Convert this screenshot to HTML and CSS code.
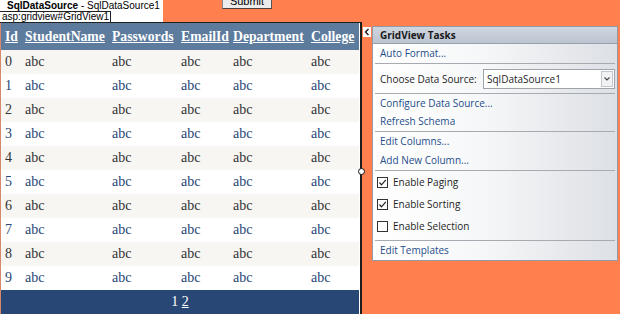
FILE: index.html
```html
<!DOCTYPE html>
<html>
<head>
<meta charset="utf-8">
<link rel="stylesheet" href="styles.css">
</head>
<body>
<div class="top">
  <div class="dslabel">
    <span class="dsline"><b>SqlDataSource</b> - SqlDataSource1</span>
    <div class="tip">asp:gridview#GridView1</div>
  </div>
  <div class="submit">Submit</div>
</div>
<div class="main">
  <div class="frame">
    <table class="grid">
      <colgroup>
        <col class="c1"><col class="c2"><col class="c3"><col class="c4"><col class="c5"><col class="c6">
      </colgroup>
      <thead>
        <tr><th><a>Id</a></th><th><a>StudentName</a></th><th><a>Passwords</a></th><th><a>EmailId</a></th><th><a>Department</a></th><th><a>College</a></th></tr>
      </thead>
      <tbody>
        <tr class="r"><td>0</td><td>abc</td><td>abc</td><td>abc</td><td>abc</td><td>abc</td></tr>
        <tr class="alt"><td>1</td><td>abc</td><td>abc</td><td>abc</td><td>abc</td><td>abc</td></tr>
        <tr class="r"><td>2</td><td>abc</td><td>abc</td><td>abc</td><td>abc</td><td>abc</td></tr>
        <tr class="alt"><td>3</td><td>abc</td><td>abc</td><td>abc</td><td>abc</td><td>abc</td></tr>
        <tr class="r"><td>4</td><td>abc</td><td>abc</td><td>abc</td><td>abc</td><td>abc</td></tr>
        <tr class="alt"><td>5</td><td>abc</td><td>abc</td><td>abc</td><td>abc</td><td>abc</td></tr>
        <tr class="r"><td>6</td><td>abc</td><td>abc</td><td>abc</td><td>abc</td><td>abc</td></tr>
        <tr class="alt"><td>7</td><td>abc</td><td>abc</td><td>abc</td><td>abc</td><td>abc</td></tr>
        <tr class="r"><td>8</td><td>abc</td><td>abc</td><td>abc</td><td>abc</td><td>abc</td></tr>
        <tr class="alt"><td>9</td><td>abc</td><td>abc</td><td>abc</td><td>abc</td><td>abc</td></tr>
        <tr class="pager"><td colspan="6">1 <a>2</a></td></tr>
      </tbody>
    </table>
    <span class="handle"></span>
  </div>
  <div class="smarttag"><svg width="8" height="10" viewBox="0 0 8 10"><polyline points="5.5,2 2.5,5 5.5,8" fill="none" stroke="#1a1a1a" stroke-width="1.4"/></svg></div>
  <div class="tasks">
    <div class="tasks-h">GridView Tasks</div>
    <div class="sec s1"><div class="item link">Auto Format...</div></div>
    <div class="sec s2">
      <span class="lbl">Choose Data Source:</span>
      <div class="dd"><span class="ddtext">SqlDataSource1</span><span class="ddbtn"><svg width="8" height="6" viewBox="0 0 8 6"><polyline points="1.5,1.5 4,4 6.5,1.5" fill="none" stroke="#444" stroke-width="1.1"/></svg></span></div>
    </div>
    <div class="sec s3">
      <div class="item link">Configure Data Source...</div>
      <div class="item link">Refresh Schema</div>
    </div>
    <div class="sec s4">
      <div class="item link">Edit Columns...</div>
      <div class="item link">Add New Column...</div>
    </div>
    <div class="sec s5">
      <div class="chk"><span class="box"><svg width="9" height="9" viewBox="0 0 9 9"><polyline points="1.5,4.5 3.5,6.8 7.8,1.8" fill="none" stroke="#222" stroke-width="1.2"/></svg></span><span>Enable Paging</span></div>
      <div class="chk"><span class="box"><svg width="9" height="9" viewBox="0 0 9 9"><polyline points="1.5,4.5 3.5,6.8 7.8,1.8" fill="none" stroke="#222" stroke-width="1.2"/></svg></span><span>Enable Sorting</span></div>
      <div class="chk"><span class="box"></span><span>Enable Selection</span></div>
    </div>
    <div class="sec s6"><div class="item link">Edit Templates</div></div>
  </div>
</div>
</body>
</html>
```
FILE: styles.css
```css
html, body {
  margin: 0;
  padding: 0;
}
body {
  background: #ff7f4f;
  width: 620px;
  height: 314px;
  overflow: hidden;
  font-family: "Liberation Serif", serif;
}

/* top strip */
.top {
  display: flex;
  align-items: flex-start;
  height: 22px;
}
.dslabel {
  position: relative;
  width: 163px;
  height: 22px;
  box-sizing: border-box;
  background: #fff;
  padding-left: 7px;
  font: 10px/12px "Liberation Sans", Arial, sans-serif;
  color: #000;
}
.dsline {
  display: block;
  white-space: nowrap;
}
.tip {
  position: absolute;
  left: 0;
  top: 11px;
  width: 111px;
  height: 12px;
  box-sizing: border-box;
  border: 1px solid #222;
  border-left: none;
  background: #fff;
  padding-left: 2px;
  font: 10px/10px "Liberation Sans", Arial, sans-serif;
  white-space: nowrap;
  z-index: 2;
}
.submit {
  margin-left: 59px;
  margin-top: -7px;
  width: 50px;
  height: 16px;
  box-sizing: border-box;
  border: 1px solid #8a8a8a;
  border-right-color: #555;
  border-bottom-color: #444;
  background: #ececec;
  font: 11px/14px "Liberation Sans", Arial, sans-serif;
  text-align: center;
  color: #000;
}

/* main area */
.main {
  display: flex;
  align-items: flex-start;
}
.frame {
  position: relative;
  border-top: 1px solid #1e1e1e;
  border-left: 1px solid #d8886a;
  border-right: 2px solid #1e1e1e;
  padding-right: 1px;
  background: #fff;
}
.grid {
  border-collapse: collapse;
  border-spacing: 0;
  table-layout: fixed;
  width: 358px;
  font-size: 14px;
  color: #333;
}
.c1 { width: 20px; }
.c2 { width: 87px; }
.c3 { width: 69px; }
.c4 { width: 52px; }
.c5 { width: 78px; }
.c6 { width: 52px; }
.grid th, .grid td {
  padding: 0 4px;
  text-align: left;
  white-space: nowrap;
  overflow: hidden;
}
.grid th {
  height: 27px;
  background: #5d7b9d;
  color: #fff;
  font-weight: bold;
  font-size: 13.7px;
}
.grid th a {
  color: #fff;
  text-decoration: underline;
}
.grid td {
  height: 24px;
  line-height: 16px;
}
.grid .r td {
  background: #f7f6f3;
  color: #333;
}
.grid .alt td {
  background: #fff;
  color: #284775;
}
.grid .pager td {
  background: #284775;
  color: #fff;
  text-align: center;
}
.grid .pager a {
  color: #fff;
  text-decoration: underline;
}
.handle {
  position: absolute;
  left: 357px;
  top: 145px;
  width: 5px;
  height: 5px;
  border: 1px solid #111;
  border-radius: 50%;
  background: #fff;
}
.smarttag {
  margin: 5px 1px 0 1px;
  width: 8px;
  height: 10px;
  background: #fff;
  display: flex;
}

/* tasks panel */
.tasks {
  margin-top: 4px;
  width: 246px;
  box-sizing: border-box;
  border: 1px solid #949aa3;
  background: linear-gradient(to right, #ffffff 0%, #f6f7f8 45%, #dde0e5 100%);
  font: 10px "Open Sans", "Noto Sans", sans-serif;
  color: #1e1e1e;
}
.tasks-h {
  height: 16px;
  line-height: 16px;
  padding-left: 7px;
  background: linear-gradient(#d0d6df, #bcc4d1);
  border-bottom: 1px solid #97a0ad;
  font-weight: bold;
  color: #1a1a1a;
}
.sec {
  margin: 0 2px;
  padding-left: 5px;
  border-bottom: 1px solid #a7abb1;
}
.s6 {
  border-bottom: none;
}
.item {
  height: 19px;
  line-height: 19px;
  white-space: nowrap;
}
.link {
  color: #1e4d8b;
}
.s2 {
  height: 29px;
  display: flex;
  align-items: center;
}
.lbl {
  width: 103px;
  flex: none;
  white-space: nowrap;
}
.dd {
  width: 132px;
  height: 20px;
  box-sizing: border-box;
  border: 1px solid #9ea4ac;
  background: #fff;
  display: flex;
  align-items: center;
  justify-content: space-between;
  padding: 0 1px 0 3px;
}
.ddbtn {
  width: 12px;
  height: 16px;
  box-sizing: border-box;
  border: 1px solid #c2c6cc;
  background: #f1f2f4;
  display: flex;
  align-items: center;
  justify-content: center;
}
.s3 .item {
  height: 18px;
  line-height: 18px;
}
.s3 {
  padding-bottom: 1px;
}
.s5 {
  padding-bottom: 3px;
  padding-left: 2px;
}
.chk {
  height: 22px;
  display: flex;
  align-items: center;
  gap: 5px;
  white-space: nowrap;
}
.box {
  width: 11px;
  height: 11px;
  box-sizing: border-box;
  border: 1px solid #333;
  background: #fff;
  display: flex;
  align-items: center;
  justify-content: center;
}
```
